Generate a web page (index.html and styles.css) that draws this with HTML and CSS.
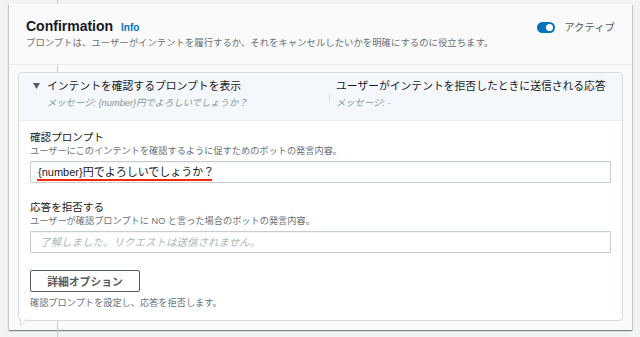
FILE: index.html
```html
<!DOCTYPE html>
<html lang="ja">

<head>
    <meta charset="UTF-8">
    <meta name="viewport" content="width=device-width, initial-scale=1.0">
    <title>Confirmation</title>
    <link rel="stylesheet" href="styles.css">
</head>

<body>
    <div class="flow-line"></div>

    <section class="card">
        <header class="card-head">
            <div class="head-row">
                <h2 class="title">Confirmation <a class="info">Info</a></h2>
                <div class="status">
                    <span class="toggle"><span class="knob"></span></span>
                    <span class="status-text">アクティブ</span>
                </div>
            </div>
            <p class="head-desc">プロンプトは、ユーザーがインテントを履行するか、それをキャンセルしたいかを明確にするのに役立ちます。</p>
        </header>

        <div class="panel">
            <div class="panel-top">
                <div class="summary summary-main">
                    <div class="summary-title">
                        <svg class="caret" width="14" height="8" viewBox="0 0 14 8">
                            <polygon points="0,1 7,1 3.5,7" fill="#545b64" />
                        </svg>
                        インテントを確認するプロンプトを表示
                    </div>
                    <div class="summary-meta indent">メッセージ: {number}円でよろしいでしょうか？</div>
                </div>
                <div class="sep"></div>
                <div class="summary">
                    <div class="summary-title">ユーザーがインテントを拒否したときに送信される応答</div>
                    <div class="summary-meta">メッセージ: -</div>
                </div>
            </div>

            <div class="panel-body">
                <div class="field">
                    <div class="label">確認プロンプト</div>
                    <div class="hint">ユーザーにこのインテントを確認するように促すためのボットの発言内容。</div>
                    <div class="input"><span class="marked">{number}円でよろしいでしょうか？</span></div>
                </div>

                <div class="field">
                    <div class="label">応答を拒否する</div>
                    <div class="hint">ユーザーが確認プロンプトに NO と言った場合のボットの発言内容。</div>
                    <div class="input placeholder">了解しました。リクエストは送信されません。</div>
                </div>

                <button class="btn">詳細オプション</button>
                <div class="hint foot">確認プロンプトを設定し、応答を拒否します。</div>
            </div>

            <svg class="tail" width="9" height="8" viewBox="0 0 9 8">
                <polygon points="0.5,0 0.5,6.5 7,0" fill="#ffffff" />
                <polyline points="0.5,0 0.5,6.5 7,0" fill="none" stroke="#d5dbdb" stroke-width="1" />
            </svg>
        </div>
    </section>
</body>

</html>
```

FILE: styles.css
```css
body {
    font-family: 'Liberation Sans', 'Noto Sans CJK JP', sans-serif;
    margin: 0;
    width: 640px;
    height: 337px;
    overflow: hidden;
    position: relative;
    background-color: #f2f3f3;
    color: #16191f;
}

.flow-line {
    position: absolute;
    left: 57px;
    top: 0;
    width: 1px;
    height: 337px;
    background-color: #aad8e2;
    z-index: 1;
}

.card {
    margin: 4px 8px 0 9px;
    height: 326px;
    background-color: #fafafa;
    box-shadow: 0 1px 1px 0 rgba(0, 28, 36, 0.3), 1px 1px 1px 0 rgba(0, 28, 36, 0.15), -1px 1px 1px 0 rgba(0, 28, 36, 0.15);
}

.card-head {
    position: relative;
    z-index: 2;
    background-color: #fafafa;
    padding: 14px 16px 15px 17px;
    border-bottom: 1px solid #eaeded;
}

.head-row {
    display: flex;
    align-items: center;
    justify-content: space-between;
    height: 18px;
}

.title {
    margin: 0;
    font-size: 14px;
    line-height: 18px;
    font-weight: bold;
    color: #16191f;
}

.info {
    margin-left: 4px;
    font-size: 10px;
    color: #0073bb;
    font-weight: bold;
}

.status {
    display: flex;
    align-items: center;
    gap: 9px;
    margin-top: 1px;
    margin-right: 1px;
}

.toggle {
    width: 18px;
    height: 11px;
    border-radius: 6px;
    background-color: #0073bb;
    display: flex;
    align-items: center;
    justify-content: flex-end;
    padding-right: 2px;
    box-sizing: border-box;
}

.knob {
    width: 7px;
    height: 7px;
    border-radius: 50%;
    background-color: white;
}

.status-text {
    font-size: 10.4px;
    line-height: 14px;
    color: #545b64;
}

.head-desc {
    margin: 1px 0 0;
    font-size: 9.4px;
    line-height: 12px;
    color: #687078;
}

.panel {
    position: relative;
    z-index: 2;
    margin: 7px 9px 0 9px;
    background-color: white;
    border: 1px solid #d5dbdb;
    border-radius: 4px;
}

.panel-top {
    display: flex;
    align-items: flex-start;
    background-color: #f4f8fc;
    border-bottom: 1px solid #eaeded;
    border-radius: 4px 4px 0 0;
    padding: 5px 0 10px 14px;
}

.summary-main {
    width: 296px;
}

.summary-title {
    display: flex;
    align-items: center;
    font-size: 10.8px;
    line-height: 16px;
    color: #16191f;
}

.caret {
    flex-shrink: 0;
}

.summary-meta {
    margin-top: 2px;
    font-size: 9.3px;
    line-height: 14px;
    font-style: italic;
    color: #879596;
}

.indent {
    margin-left: 14px;
}

.sep {
    width: 1px;
    height: 8px;
    margin: 16px 6px 0 0;
    background-color: #d5dbdb;
}

.panel-body {
    padding: 8px 11px 11px 11px;
}

.field {
    margin-bottom: 16px;
}

.field:nth-child(2) {
    margin-bottom: 17px;
}

.label {
    font-size: 10.6px;
    line-height: 16px;
    color: #16191f;
}

.hint {
    font-size: 9.2px;
    line-height: 12px;
    color: #687078;
}

.input {
    margin-top: 4px;
    height: 22px;
    box-sizing: border-box;
    border: 1px solid #c6cdcf;
    border-radius: 1px;
    padding: 0 7px;
    font-size: 11px;
    line-height: 20px;
    color: #16191f;
    box-shadow: inset 0 1px 1px rgba(0, 0, 0, 0.04);
}

.marked {
    position: relative;
}

.marked::after {
    content: "";
    position: absolute;
    left: -1px;
    right: 2px;
    bottom: -3px;
    height: 2px;
    background-color: #f42a0c;
}

.placeholder {
    padding-left: 9px;
    font-size: 10.5px;
    font-style: italic;
    color: #aab7b8;
}

.btn {
    display: block;
    width: 110px;
    height: 22px;
    padding: 0;
    border: 1px solid #545b64;
    border-radius: 2px;
    background-color: white;
    font-family: inherit;
    font-size: 10.8px;
    font-weight: bold;
    color: #545b64;
}

.foot {
    margin-top: 5px;
}

.tail {
    position: absolute;
    left: 1px;
    bottom: -7px;
}
```
